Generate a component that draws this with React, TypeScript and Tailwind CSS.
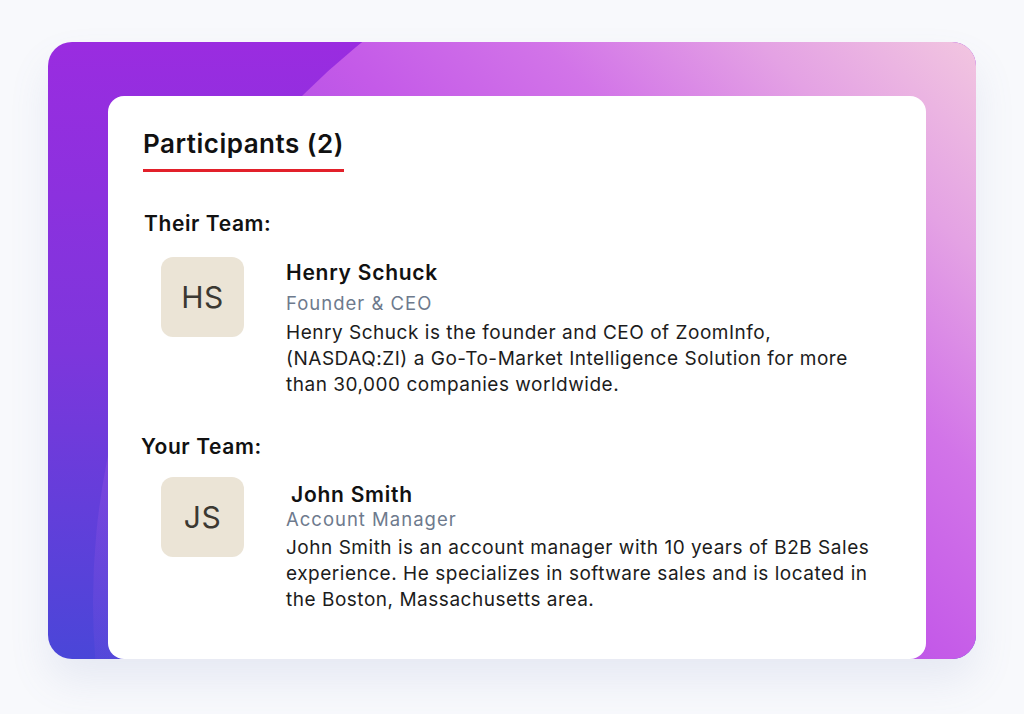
import React from 'react';

interface Person {
  initials: string;
  name: string;
  role: string;
  bio: string[];
}

const theirTeam: Person = {
  initials: 'HS',
  name: 'Henry Schuck',
  role: 'Founder & CEO',
  bio: [
    'Henry Schuck is the founder and CEO of ZoomInfo,',
    '(NASDAQ:ZI) a Go-To-Market Intelligence Solution for more',
    'than 30,000 companies worldwide.',
  ],
};

const yourTeam: Person = {
  initials: 'JS',
  name: 'John Smith',
  role: 'Account Manager',
  bio: [
    'John Smith is an account manager with 10 years of B2B Sales',
    'experience. He specializes in software sales and is located in',
    'the Boston, Massachusetts area.',
  ],
};

interface RowProps {
  person: Person;
  textTop: string;
  nameIndent: string;
  roleGap: string;
  bioGap: string;
}

function PersonRow({ person, textTop, nameIndent, roleGap, bioGap }: RowProps) {
  return (
    <div className="flex items-start pl-[53px]">
      <div className="w-[83px] h-[80px] rounded-[12px] bg-[#ebe4d6] flex items-center justify-center text-[30px] tracking-[0.5px] text-[#3b3832] shrink-0">
        {person.initials}
      </div>
      <div className={`ml-[42px] ${textTop}`}>
        <div className={`text-[21px] font-semibold tracking-[0.75px] text-[#111] leading-[26px] ${nameIndent}`}>
          {person.name}
        </div>
        <div className={`text-[18.5px] tracking-[1px] text-[#6e7a8d] leading-[22px] ${roleGap}`}>{person.role}</div>
        <div className={`text-[19px] tracking-[0.52px] text-[#1c1c1c] leading-[26px] ${bioGap}`}>
          {person.bio.map((line) => (
            <div key={line} className="whitespace-nowrap">
              {line}
            </div>
          ))}
        </div>
      </div>
    </div>
  );
}

export default function App() {
  return (
    <div
      className="w-[1024px] h-[714px] bg-[#f8f9fc] pt-[42px] pl-[48px]"
      style={{ fontFamily: 'Inter, "Noto Sans", sans-serif' }}
    >
      <div className="relative w-[928px] h-[617px] rounded-[24px] overflow-hidden shadow-[0_22px_40px_rgba(110,120,180,0.12)] bg-[linear-gradient(180deg,#9a2ce0_0%,#7d36dc_50%,#4a46d8_100%)]">
        <div className="absolute inset-0 [clip-path:circle(717px_at_762px_560px)] bg-[linear-gradient(225deg,#f2c6e0_0%,#e4a2e4_14%,#d274e8_28%,#c45ae8_42%,rgba(168,88,230,0.6)_62%,rgba(110,80,220,0.15)_100%)]" />
        <div className="relative mt-[54px] ml-[60px] w-[818px] h-[563px] bg-white rounded-[16px] pt-[32px]">
          <div className="pl-[35px]">
            <div className="inline-block">
              <h1 className="text-[26px] font-semibold tracking-[0.5px] text-[#111] leading-[32px]">Participants (2)</h1>
              <div className="h-[3px] bg-[#e2202a] mt-[9px] w-[201px]" />
            </div>
          </div>
          <div className="pl-[36px] mt-[39px] text-[21px] font-semibold tracking-[0.6px] text-[#111] leading-[26px]">
            Their Team:
          </div>
          <div className="mt-[20px]">
            <PersonRow person={theirTeam} textTop="pt-[3px]" nameIndent="" roleGap="mt-[6px]" bioGap="mt-[6px]" />
          </div>
          <div className="pl-[33px] mt-[36px] text-[21px] font-semibold tracking-[0.6px] text-[#111] leading-[26px]">
            Your Team:
          </div>
          <div className="mt-[17px]">
            <PersonRow person={yourTeam} textTop="pt-[5px]" nameIndent="pl-[5px]" roleGap="mt-0" bioGap="mt-[5px]" />
          </div>
        </div>
      </div>
    </div>
  );
}
